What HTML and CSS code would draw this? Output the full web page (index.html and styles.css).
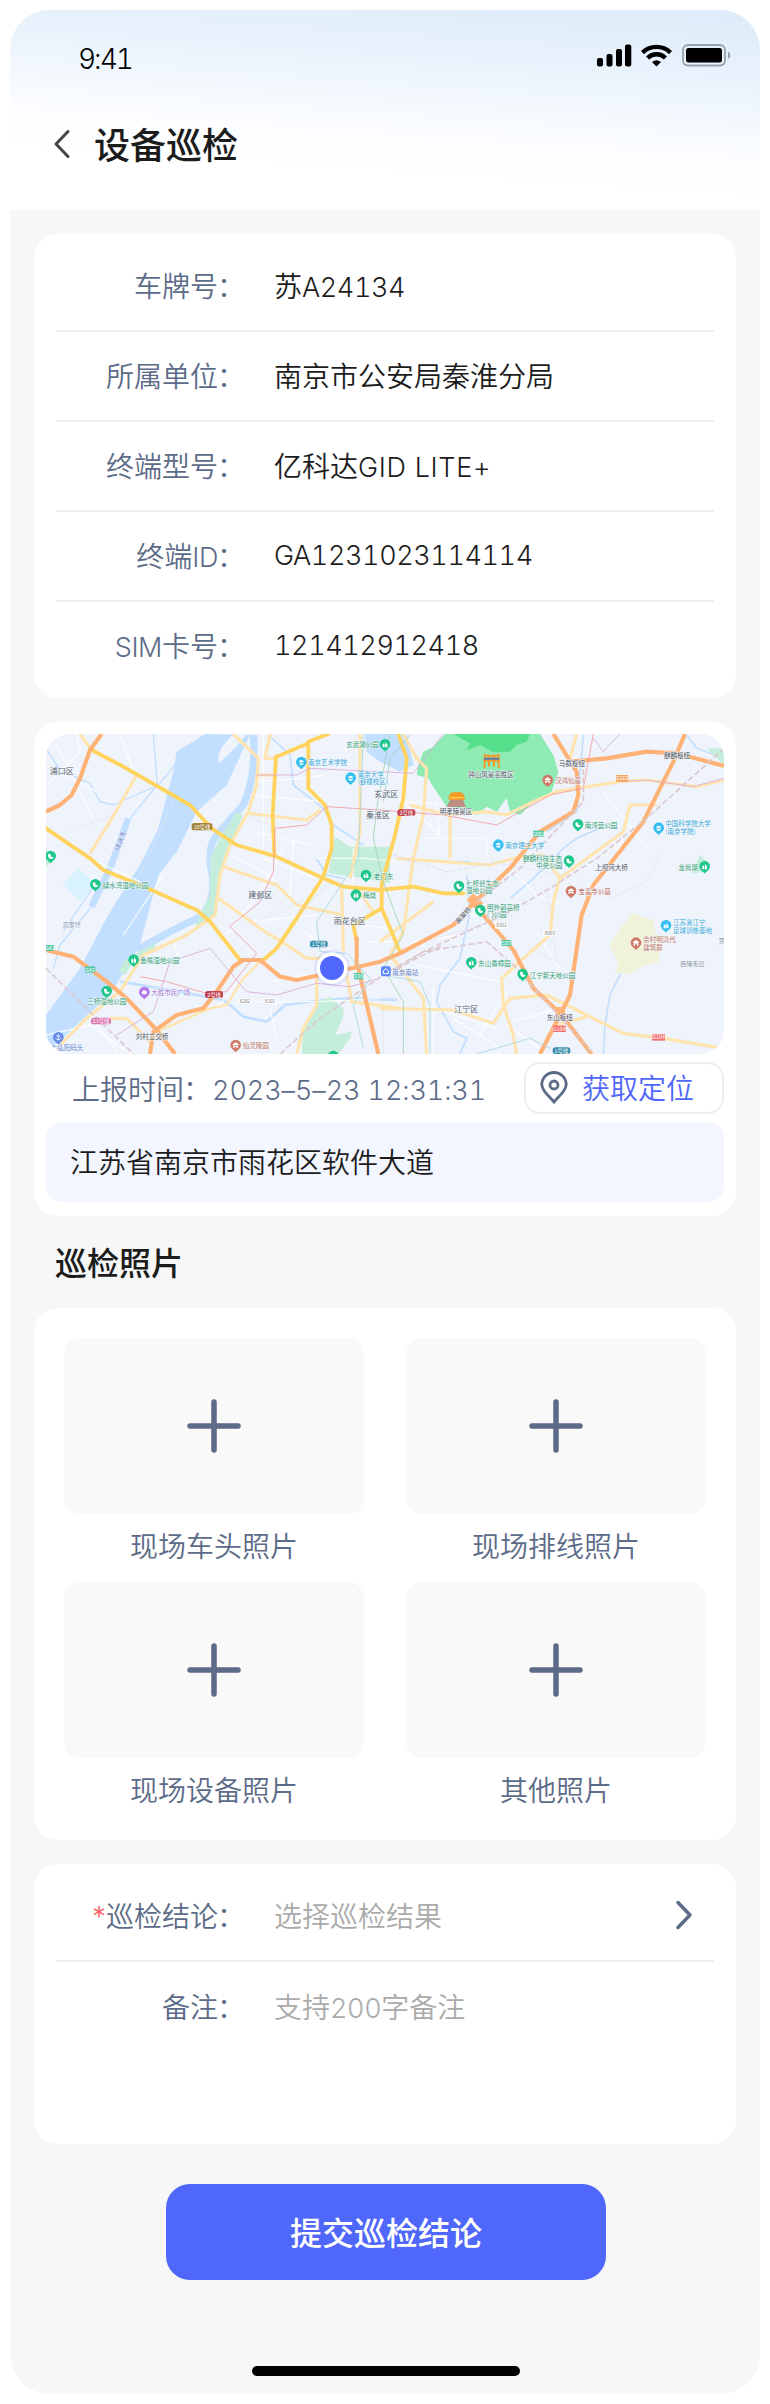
FILE: index.html
```html
<!DOCTYPE html>
<html lang="zh-CN">
<head>
<meta charset="utf-8">
<title>设备巡检</title>
<link rel="stylesheet" href="styles.css">
</head>
<body>
<div class="device">
  <header class="header">
    <div class="status">
      <span class="clock">9:41</span>
      <svg class="status-icons" width="134" height="24" viewBox="0 0 134 24">
        <rect x="0" y="14" width="6" height="8.5" rx="2"/><rect x="9.500" y="10" width="6" height="12.5" rx="2"/><rect x="19" y="5" width="6" height="17.5" rx="2"/><rect x="28" y="0.500" width="6.300" height="22" rx="2"/>
        <g fill="none" stroke="#000" stroke-width="4.400"><path d="M45.500 8.600a20 20 0 0 1 28 0"/><path d="M50.600 14a12.600 12.600 0 0 1 17.800 0"/></g>
        <path d="M55 18q4.500-3.600 9 0l-4.500 4.500z"/>
        <rect x="86" y="1" width="42" height="20.500" rx="5" fill="none" stroke="#98a2aa" stroke-width="1.800"/><rect x="89" y="4" width="36" height="14.500" rx="2.500"/><path d="M131 7.500c3 1.500 3 6 0 7.500z" fill="#98a2aa"/>
      </svg>
    </div>
    <div class="titlebar">
      <svg class="back" width="18" height="30" viewBox="0 0 18 30"><path d="M15 2.500L3 15l12 12.500"/></svg>
      <h1 class="title">设备巡检</h1>
    </div>
  </header>
  <main class="content">
    <section class="card info">
      <div class="row"><span class="label">车牌号<span class="colon">：</span></span><span class="value">苏<span class="latin">A24134</span></span></div>
      <div class="row"><span class="label">所属单位<span class="colon">：</span></span><span class="value">南京市公安局秦淮分局</span></div>
      <div class="row"><span class="label">终端型号<span class="colon">：</span></span><span class="value">亿科达<span class="latin model">GID LITE+</span></span></div>
      <div class="row"><span class="label">终端<span class="latin">ID</span><span class="colon">：</span></span><span class="value latin">GA1231023114114</span></div>
      <div class="row"><span class="label"><span class="latin">SIM</span>卡号<span class="colon">：</span></span><span class="value latin">121412912418</span></div>
    </section>

    <section class="card location">
      <svg class="map" width="678" height="320" viewBox="48 57 2034 960">
        <rect x="48" y="57" width="2034" height="960" fill="#eff3fb"/>
        <!-- water -->
        <g fill="#c2dfff">
          <path d="M525 57L440 110 430 170 385 340 330 450 240 590 150 760 48 900V1017L150 920 240 840 330 690 385 480 440 410 500 290 590 210 660 60z"/>
          <path d="M1005 57H1130L1150 150 1110 170 1050 140 1010 110z"/>
        </g>
        <path d="M612 57Q560 100 565 145 610 110 650 57z" fill="#eff3fb"/>
        <g fill="none" stroke="#c2dfff" stroke-linejoin="round">
          <path d="M670 60Q680 180 640 270L560 360Q530 400 545 470T520 600L420 650 320 705" stroke-width="22"/>
          <path d="M295 310L240 460 185 575" stroke-width="20"/>
          <path d="M370 57L382 210 300 310 M48 100L90 165 180 205 210 260 250 270 385 210 435 150 M185 575L90 690 70 760 M200 500L100 650" stroke-width="4"/>
          <path d="M270 800L420 825 580 855 600 870 640 905 710 920 765 870 880 855 960 850 1100 855" stroke-width="8"/>
          <path d="M715 60L780 120 790 210 880 280 910 330 1000 390 M860 430L890 480 940 490M1310 480L1320 590 1290 730 1230 810 1220 860 1270 950 1310 970 1290 1017M1100 430L1180 440 1320 440M1440 550L1500 500 1600 400 1640 370 1710 340M1660 60L1640 290 1550 350M1970 60L2000 100 2082 130M1780 760L1740 840 1725 930 1720 1017" stroke-width="5"/>
        </g>
        <!-- parks -->
        <g fill="#c4eedb">
          <path d="M620 290L640 300 600 390 570 470 555 600 495 635 540 540 540 430 575 360z"/><path d="M375 683V700L310 740 285 780 265 770 285 735z"/><path d="M915 365L960 395 1080 395V505L1000 490 895 475z"/><path d="M865 860L900 845 940 880 940 905 915 960 965 950 960 970 925 1017H815L820 940z"/><path d="M48 400L75 430 48 455z"/><path d="M2010 420L2035 445 2030 470 1985 475z"/><path d="M2030 100H2082V150z"/>
        </g>
        <path d="M145 460L195 505 150 558 98 510z" fill="#d9f2ff"/>
        <path d="M1805 595L1870 615 1875 650 1895 680 1885 740 1835 755 1800 780 1755 770 1765 745 1738 690z" fill="#f0f2d9"/>
        <path d="M1245 57H1530L1570 120 1585 170 1565 230 1500 270 1470 300 1440 290 1430 250 1400 290 1370 275 1340 300 1290 280 1250 275 1210 215 1195 190 1160 180 1165 150 1180 110 1210 95z" fill="#8eebb4"/>
        <path d="M1270 57H1500L1490 80 1460 90 1440 110 1390 112 1350 90 1310 105 1320 85z" fill="#56df8a"/>
        <!-- minor streets -->
        <g fill="none" stroke="#fff" stroke-width="4">
          <path d="M60 200L150 110 140 57M48 150L200 230M80 90L190 310M270 57L310 170M200 440L330 500M400 480L280 660M430 680L445 730M680 200L820 190 880 180M660 240L880 260M680 350L840 390M700 430L860 490M600 420L700 470 740 500M590 660L690 530 760 400M700 60L700 420M790 380L780 540 M660 620L860 600M720 800L830 780M560 880L620 800M720 880L740 970M630 860H860L1050 850" opacity=".8"/>
          <path d="M860 430H1010L1100 440M820 560L880 500M970 400V560M990 630L1080 640M1010 680H1100M1080 230L1200 330 1240 380M1180 370H1370V420M1120 260L1220 265 1230 370M1160 440L1380 450M1200 540L1380 530M1150 680L1300 660M1160 750L1410 800M1210 810V1017M1180 870L1400 940M1270 910L1410 1000M1430 930L1530 1000M1300 590L1400 620M1430 830L1350 960M1520 650L1600 780M1450 920L1620 870M1780 370L1730 480M1720 230L1850 400" opacity=".8"/>
          <path d="M48 960L180 930 300 1017M180 900L260 1010M820 650L910 710M1440 460L1520 540 1600 570" opacity=".8"/>
        </g>
        <g fill="none" stroke="#e1e5ee" stroke-width="2"><path d="M430 260L330 480M600 290L760 340M1380 440L1600 480M1550 520L1580 740M1150 690L1450 600M120 350L250 300M680 620L850 540M1500 700L1600 750M1060 850V1017M1900 400L1850 500 1740 550"/></g>
        <!-- secondary roads -->
        <g fill="none" stroke="#ffe4b0" stroke-width="9.500" stroke-linejoin="round">
          <path d="M150 57L185 105M320 180L240 320 180 415M610 57L685 130 680 210 655 290 600 390 570 480 555 600 470 660 340 720 270 830 170 910 90 990"/>
          <path d="M720 57L705 130H740M685 180H735M655 295L830 315 870 285M580 455L740 510 800 570 940 600M565 550L690 640 770 690 830 730H910M935 520L940 710M950 780L965 860 1110 880M990 57L990 350 960 490M860 780L860 870 820 940 800 1017M240 910H290L360 980M980 520L1030 590"/>
          <path d="M700 730L640 790 590 870 540 880 380 950" stroke-width="7"/>
          <path d="M1120 57L1160 130 1190 160 1180 300 1150 430 1120 650 1080 720 1180 850 1190 1017M1100 430L1380 450 1470 425 1540 420 1590 490M1260 280V430M1140 270L1250 300 1370 290 1430 300 1510 260 1580 230 1770 200 1850 195 2000 215 2082 195M1640 57L1620 130M1880 270L1800 270 1780 350 1590 490 1570 560 1560 660 1480 730 1415 790 1420 870 1450 960 1460 1017M1050 880L1270 885 1390 925 1440 850 1550 840 1670 900 1780 955 1900 970 2082 1000M1580 930L1670 905M1210 560L1050 680"/>
        </g>
        <!-- arterial roads -->
        <g fill="none" stroke="#ffd35c" stroke-width="11.500" stroke-linejoin="round" stroke-linecap="round">
          <path d="M185 105L280 155 480 270 545 340 620 390 740 425 870 485 940 515 1050 525 1150 515 1240 535H1300"/>
          <path d="M48 340L180 430 220 465 330 510 500 585 540 620 630 735H700L740 700 800 610 880 485 905 400V330L885 270 835 220V80L895 57M740 125L835 85M738 125L728 300 733 420"/>
          <path d="M1105 57L1130 130 1120 250 1095 360 1055 510V580L970 630 980 680M1055 580L1110 710" />
        </g>
        <!-- expressways -->
        <g fill="none" stroke="#ffb275" stroke-width="12.500" stroke-linejoin="round">
          <path d="M215 57L180 105 150 190 125 240 90 270 48 290M48 705L130 725 230 800 290 850 380 945 435 1017M360 1017L370 950 440 900 520 880 560 830 610 755 640 735 690 735 750 785 800 795 870 780 985 755 1050 740 1110 715 1270 630 1330 565 1440 460 1530 350 1630 290 1645 240 1640 170 1570 57M985 760L1045 1017M1330 565L1450 705 1510 820 1590 895 1685 1017M1620 140L1730 130 1850 110 1940 115 2082 153M1965 57L1930 140 1840 320 1690 510 1655 600 1620 840 1590 900 1530 1017M980 665V755"/>
          <path d="M1320 545L1350 575M1575 890H1605" stroke-width="28"/>
        </g>
        <!-- rail and metro lines -->
        <g fill="none" stroke-width="2.500">
          <path d="M730 470L690 560 600 635 680 715 590 830 530 835 410 800 330 785M730 470L735 340 830 330 890 275 1050 285 1240 300 1400 330 1560 240 1660 220 1690 57" stroke="#f19ba0"/>
          <path d="M260 960L370 890 420 740 540 700 650 830 740 840 860 805 960 815 1050 790M680 180H800L840 160 1150 175 1240 57M1690 70L1720 110 1770 57M1770 200L1850 195 1990 215 2082 190" stroke="#d8aad8"/>
          <path d="M1080 57L1040 280 1030 370 1060 500 1120 660 1060 760 1120 860V1017M1140 60L1080 130 1060 260" stroke="#a5d3b5"/>
          <path d="M1000 57L985 430 860 620 870 710 950 715 1020 790 970 870 1000 1000M1060 780L1170 800 1200 870V1017M1340 1017L1500 970 1560 1000" stroke="#a4d7dc"/>
          <path d="M48 760L310 1017M750 1017L870 910 1060 780 1180 710 1420 600 1560 520 1700 430 1850 310 2082 100M1100 765L1180 710 1370 680 1450 750 1690 1017M1100 760L1240 690M1340 560L1470 460 1660 260 1660 160" stroke="#dbc9cf" stroke-width="5" stroke-dasharray="18 8"/>
          <path d="M1090 420L1250 470 1420 440M845 560L890 510M800 600L840 560" stroke="#d4dae6" stroke-dasharray="14 6"/>
        </g>
        <!-- landmarks -->
        <g fill="none" stroke="#f19b2c" stroke-width="6"><path d="M1362 122H1408M1360 137H1410M1364 117V160M1377 120V155M1392 120V155M1406 117V160"/><path d="M1362 131H1408" stroke="#62769b"/></g>
        <path d="M1262 252H1298L1308 276H1250z" fill="#bd8f84"/><path d="M1256 254V244L1262 236H1298L1304 244V254zM1258 240L1266 232H1294L1302 240z" fill="#f59a25"/><path d="M1260 248H1300" stroke="#ffcb4f" stroke-width="4"/>
        <!-- place pins -->
        <defs>
          <path id="drop" d="M0 20C-5 13-16 9-16-2A16 16 0 1 1 16-2C16 9 5 13 0 20z"/>
          <g id="park"><use href="#drop"/><path d="M-7 7V-2Q-4-7-1-2V7M1 7V-9L7-2V7" fill="#fff"/></g>
          <g id="wet"><use href="#drop"/><path d="M-8-7Q2-12 1 0L9 1Q6 9-2 6-8 4-8-7" fill="#fff"/></g>
          <g id="uni"><use href="#drop"/><path d="M-9-4L0-8 9-4 0 0zM-6 0V5Q0 9 6 5V0L0 3z" fill="#fff"/></g>
          <g id="tomb"><use href="#drop"/><path d="M-9-4L0-10 9-4V-1H-9zM-7 0H7V7H3V3H-3V7H-7z" fill="#fff"/></g>
        </defs>
        <g fill="#1fc78c">
          <use href="#park" x="1065" y="90"/><use href="#park" x="1008" y="482"/><use href="#park" x="978" y="541"/><use href="#park" x="311" y="736"/><use href="#park" x="1324" y="744"/><use href="#park" x="2024" y="456"/><use href="#park" x="910" y="1025"/>
          <use href="#wet" x="62" y="425"/><use href="#wet" x="196" y="510"/><use href="#wet" x="230" y="830"/><use href="#wet" x="1644" y="330"/><use href="#wet" x="1617" y="439"/><use href="#wet" x="1287" y="515"/><use href="#wet" x="1351" y="587"/><use href="#wet" x="1478" y="779"/>
        </g>
        <g fill="#35bff0"><use href="#uni" x="814" y="143"/><use href="#uni" x="962" y="190"/><use href="#uni" x="1405" y="391"/><use href="#uni" x="1886" y="340"/><use href="#park" x="1908" y="633"/></g>
        <g fill="#cf7a67"><use href="#tomb" x="617" y="992"/><use href="#tomb" x="1553" y="197"/><use href="#tomb" x="1623" y="530"/><use href="#tomb" x="1818" y="685"/></g>
        <g fill="#b279ef"><use href="#drop" x="343" y="833"/></g><rect x="336" y="828" width="14" height="10" rx="2" fill="#fff"/><path d="M339 828q4-8 8 0" fill="none" stroke="#fff" stroke-width="2"/>
        <g fill="#688bea"><use href="#drop" x="85" y="969"/></g><path d="M85 958V975M79 963H91M77 969Q85 981 93 969" fill="none" stroke="#fff" stroke-width="2.500"/>
        <rect x="1053" y="754" width="29" height="30" rx="6" fill="#5b86f5"/><path d="M1060 768L1067 760 1075 768V776H1060z" fill="none" stroke="#fff" stroke-width="3"/>
        <!-- route badges -->
        <g class="badge">
          <rect x="485" y="324" width="62" height="22" rx="8" fill="#a4823c"/><text x="516" y="342">10号线</text>
          <rect x="525" y="828" width="54" height="21" rx="8" fill="#bf4152"/><text x="552" y="845">2号线</text>
          <rect x="840" y="677" width="53" height="20" rx="8" fill="#398eaa"/><text x="866" y="694">1号线</text>
          <rect x="183" y="908" width="60" height="20" rx="8" fill="#da75b0"/><text x="213" y="925">S3号线</text>
          <rect x="1102" y="283" width="54" height="20" rx="8" fill="#bf4152"/><text x="1129" y="300">2号线</text>
          <rect x="1568" y="997" width="53" height="20" rx="8" fill="#398eaa"/><text x="1594" y="1013">1号线</text>
          <rect x="48" y="690" width="24" height="18" fill="#52c8a6"/><text x="60" y="705">G42</text>
          <rect x="165" y="754" width="31" height="19" fill="#52c8a6"/><text x="180" y="770">G42</text>
          <rect x="972" y="774" width="28" height="19" fill="#52c8a6"/><text x="986" y="790">S55</text>
          <rect x="1509" y="347" width="33" height="18" fill="#52c8a6"/><text x="1526" y="362">S001</text>
          <rect x="1415" y="675" width="29" height="18" fill="#52c8a6"/><text x="1430" y="690">S87</text>
          <rect x="1758" y="180" width="36" height="20" fill="#f5a35f"/><text x="1776" y="196">S122</text>
          <rect x="1569" y="932" width="38" height="19" fill="#f46c6c"/><text x="1588" y="947">G104</text>
          <rect x="1867" y="958" width="38" height="19" fill="#f46c6c"/><text x="1886" y="973">G104</text>
        </g>
        <g class="shield"><rect x="627" y="850" width="36" height="17"/><text x="645" y="864">X202</text><rect x="702" y="850" width="36" height="17"/><text x="720" y="864">X101</text><rect x="1395" y="623" width="38" height="18"/><text x="1414" y="637">X102</text><rect x="1540" y="646" width="38" height="18"/><text x="1559" y="660">X003</text></g>
        <!-- place names -->
        <g class="place district"><text x="59" y="177">浦口区</text><text x="655" y="550">建邺区</text><text x="911" y="627">雨花台区</text><text x="1033" y="245">玄武区</text><text x="1008" y="309">秦淮区</text><text x="1273" y="891">江宁区</text></g>
        <g class="place green"><text x="218" y="518">绿水湾湿地公园</text><text x="331" y="745">鱼嘴湿地公园</text><text x="172" y="868">三桥湿地公园</text><text x="949" y="97">玄武湖公园</text><text x="1031" y="491">老门东</text><text x="999" y="549">梅岗</text><text x="1664" y="338">南湾营公园</text><text x="1479" y="437">麒麟科技生态</text><text x="1519" y="459">中央公园</text><text x="1308" y="513">七桥瓮生态</text><text x="1308" y="535">湿地公园</text><text x="1371" y="585">明外郭高桥</text><text x="1371" y="607">门公园</text><text x="1345" y="752">东山香樟园</text><text x="1499" y="788">江宁新天地公园</text><text x="1945" y="465">龙尚湖</text></g>
        <g class="place blue"><text x="834" y="151">南京艺术学院</text><text x="983" y="185">南京大学</text><text x="983" y="208">(鼓楼校区)</text><text x="1426" y="398">南京理工大学</text><text x="1906" y="333">中国科学院大学</text><text x="1906" y="357">(南京学院)</text><text x="1929" y="631">江苏省江宁</text><text x="1929" y="653">足球训练基地</text></g>
        <g class="place red"><text x="638" y="1000">仙灵陵园</text><text x="1575" y="205">汉鸿仙墓</text><text x="1645" y="538">宝善寺公墓</text><text x="1840" y="682">佘村明清代</text><text x="1840" y="704">建筑群</text></g>
        <g class="place dark"><text x="317" y="972">刘村立交桥</text><text x="1315" y="187">钟山风景名胜区</text><text x="1229" y="298">明孝陵景区</text><text x="1587" y="152">马群枢纽</text><text x="1902" y="128">麒麟枢纽</text><text x="1696" y="464">上坝河大桥</text><text x="1550" y="914">东山枢纽</text><text transform="translate(1285 628) rotate(-48)">高架桥</text></g>
        <g class="place gray"><text x="98" y="636">高家圩</text><text x="1951" y="754">西猪毛凹</text><text x="2066" y="684">贾</text></g>
        <g class="place indigo"><text x="364" y="841">大胜市民广场</text></g>
        <g class="place navy"><text x="62" y="1006">七弘阳码头</text><text x="1087" y="779">南京南站</text><text transform="translate(268 408) rotate(-70)">绿洲湾</text></g>
        <!-- current position -->
        <circle cx="906" cy="759" r="54" fill="#4f67fb" opacity=".12"/><circle cx="906" cy="759" r="47" fill="#fff"/><circle cx="906" cy="759" r="36" fill="#4f67fb"/>
      </svg>
      <div class="report">
        <span class="time">上报时间<span class="colon">：</span><span class="latin date">2023–5–23 12:31:31</span></span>
        <button class="locate"><svg width="28" height="33" viewBox="0 0 28 33"><path d="M14 31C9 25 1.800 20 1.800 13.500a12.200 12 0 0 1 24.400 0C26.200 20 19 25 14 31z"/><circle cx="14" cy="14" r="4"/></svg>获取定位</button>
      </div>
      <div class="address">江苏省南京市雨花区软件大道</div>
    </section>

    <h2 class="section-title">巡检照片</h2>
    <section class="card photos">
      <div class="photo"><div class="tile"><svg width="54" height="54" viewBox="0 0 54 54"><path d="M27 3v48M3 27h48"/></svg></div><span>现场车头照片</span></div>
      <div class="photo"><div class="tile"><svg width="54" height="54" viewBox="0 0 54 54"><path d="M27 3v48M3 27h48"/></svg></div><span>现场排线照片</span></div>
      <div class="photo"><div class="tile"><svg width="54" height="54" viewBox="0 0 54 54"><path d="M27 3v48M3 27h48"/></svg></div><span>现场设备照片</span></div>
      <div class="photo"><div class="tile"><svg width="54" height="54" viewBox="0 0 54 54"><path d="M27 3v48M3 27h48"/></svg></div><span>其他照片</span></div>
    </section>

    <section class="card form">
      <div class="row"><span class="label"><span class="required">*</span>巡检结论<span class="colon">：</span></span><span class="placeholder">选择巡检结果</span><svg class="more" width="18" height="30" viewBox="0 0 18 30"><path d="M3 2.500L15 15 3 27.500"/></svg></div>
      <div class="row"><span class="label">备注<span class="colon">：</span></span><span class="placeholder">支持<span class="latin">200</span>字备注</span></div>
    </section>
    <button class="submit">提交巡检结论</button>
  </main>
  <div class="home-bar"></div>
</div>
</body>
</html>
```
FILE: styles.css
```css
* { box-sizing: border-box; }
body { margin: 0; padding: 10px; background: #fff; color: #1c1c1c; font: 350 28px/40px "Noto Sans CJK SC", sans-serif; }
h1, h2 { margin: 0; font-weight: 500; }
button { border: 0; font: inherit; }
svg { display: block; flex: none; }

.device { display: flex; flex-direction: column; height: 2384px; border-radius: 40px; overflow: hidden; background: #f7f7f7; }
.header { height: 200px; background: linear-gradient(184deg, #deecf9 4%, #e8f2fc 26%, #fafcff 56%, #fff 76%); }
.status { display: flex; justify-content: space-between; padding: 28px 28px 0 68px; height: 95px; }
.clock { font-family: Inter, sans-serif; font-weight: 300; font-size: 28px; line-height: 42px; color: #000; font-variant-numeric: tabular-nums; letter-spacing: -2px; }
.status-icons { margin: 6px 1px 0 0; }
.titlebar { display: flex; align-items: center; gap: 23px; height: 78px; padding-left: 43px; }
.back { fill: none; stroke: #444; stroke-width: 3; stroke-linecap: round; stroke-linejoin: round; }
.title { margin-top: -2px; font-size: 36px; line-height: 52px; }

.content { display: flex; flex-direction: column; flex: 1; padding: 24px; }
.card { background: #fff; border-radius: 24px; flex: none; }
.info { height: 464px; padding: 5px 22px; }
.row { display: flex; align-items: center; height: 90px; }
.info .row + .row, .form .row + .row { border-top: 2px solid #eee; }
.info .row:first-child { height: 91px; padding-top: 1px; }
.label { width: 190px; margin-right: 28px; text-align: right; white-space: nowrap; color: #5c6b87; }
.info .row + .row .label, .info .row + .row .value { margin-top: -2px; }
.colon { margin: 0 1px 0 -1px; }
.latin { font-family: Inter, "Noto Sans CJK SC", sans-serif; font-weight: 300; font-size: 27px; line-height: 1; font-variant-numeric: tabular-nums; letter-spacing: -0.400px; }
.model { letter-spacing: 0.700px; }
.date { letter-spacing: -0.100px; }
.required { font-family: Inter, sans-serif; font-weight: 300; line-height: 1; color: #ff5c5c; }
.placeholder { color: #aaa; }

.location { height: 494px; margin-top: 24px; padding: 12px; }
.map { border-radius: 24px; }
.report { display: flex; align-items: center; justify-content: space-between; height: 68px; padding-left: 26px; }
.time { color: #5c6b87; white-space: nowrap; }
.locate { display: flex; align-items: center; gap: 14px; width: 200px; height: 52px; padding: 0 0 2px 14px; border: 2px solid #eee; border-radius: 16px; background: #fff; color: #4f67fb; white-space: nowrap; }
.locate svg { fill: none; stroke: #5c6b87; stroke-width: 2.800; }
.address { height: 80px; padding: 19px 24px; border-radius: 16px; background: #f3f6ff; }

.section-title { margin: 22px 0 0 21px; height: 70px; font-size: 32px; line-height: 46px; }
.photos { display: grid; grid-template-columns: 300px 300px; grid-auto-rows: 244px; column-gap: 42px; height: 532px; padding: 30px; }
.photo { display: flex; flex-direction: column; align-items: center; color: #5c6b87; }
.photo span { margin-top: 11px; }
.tile { display: grid; place-items: center; width: 300px; height: 176px; border-radius: 16px; background: #f9f9f9; }
.tile svg { fill: none; stroke: #5c6b87; stroke-width: 5.500; stroke-linecap: round; }

.form { height: 280px; margin-top: 24px; padding: 6px 22px; }
.more { margin: 0 21px 0 auto; fill: none; stroke: #5c6b87; stroke-width: 3.500; stroke-linecap: round; stroke-linejoin: round; }
.submit { flex: none; width: 440px; height: 96px; margin: 40px 0 0 132px; padding: 0 0 2px; border-radius: 24px; background: #4f67fb; color: #fff; font-size: 32px; font-weight: 500; }
.home-bar { flex: none; width: 268px; height: 10px; margin: 0 0 18px 242px; border-radius: 5px; background: #000; }

.badge { font-size: 16px; font-weight: 400; fill: #fff; text-anchor: middle; }
.shield { font-size: 14px; fill: #666; text-anchor: middle; }
.shield rect { fill: #fff; }
.place { font-size: 19.500px; font-weight: 400; stroke: #f5f8fd; stroke-width: 2.500px; paint-order: stroke; }
.district { font-size: 24px; fill: #555e6e; }
.green { fill: #2f9d73; }
.blue { fill: #35a9d8; }
.red { fill: #c07566; }
.dark { fill: #4c5260; }
.gray { fill: #8993a7; font-size: 18px; }
.indigo { fill: #a37bd3; }
.navy { fill: #6482ca; }
```
